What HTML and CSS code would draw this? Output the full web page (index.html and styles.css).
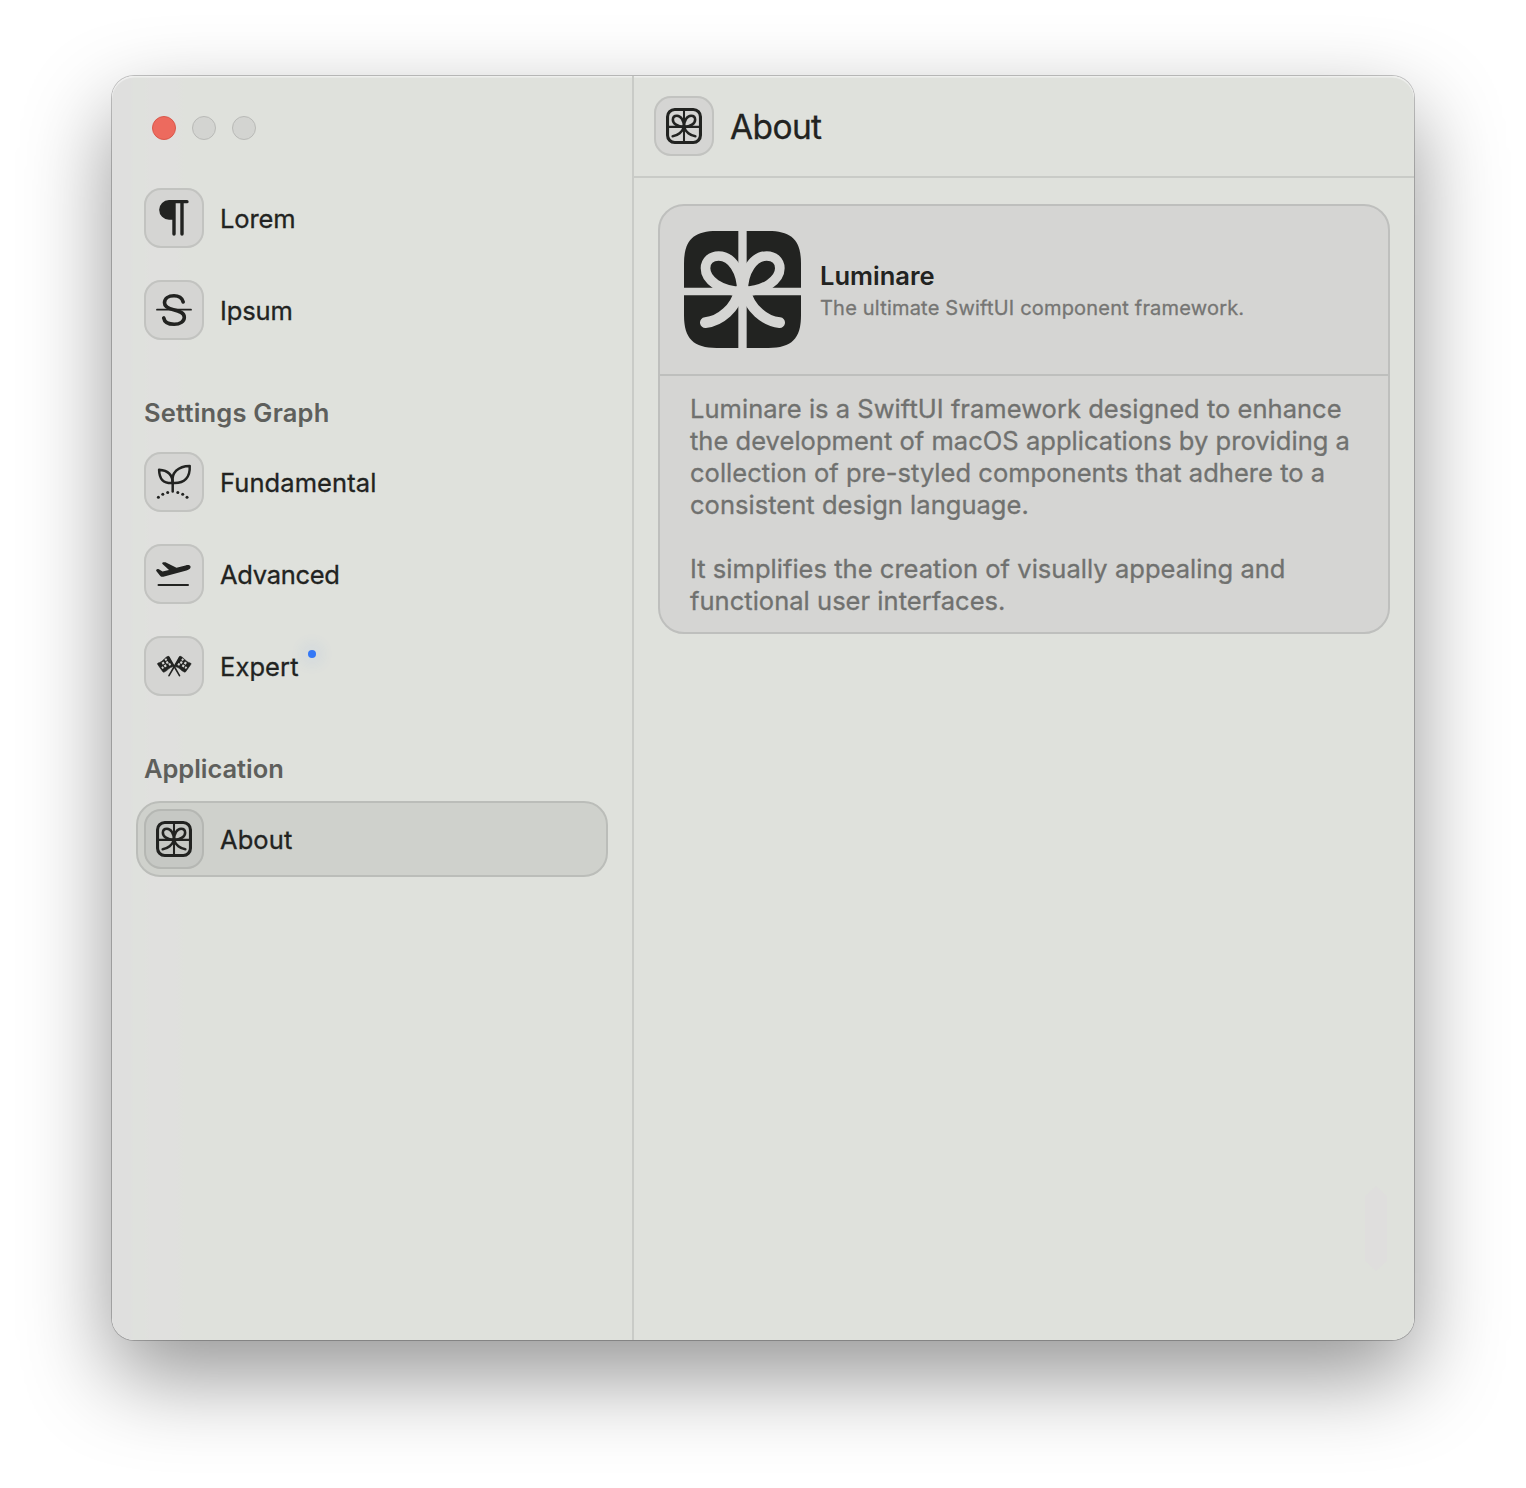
FILE: index.html
```html
<!DOCTYPE html>
<html lang="en">
<head>
<meta charset="utf-8">
<title>Luminare</title>
<link rel="stylesheet" href="styles.css">
</head>
<body>
<svg class="defs" aria-hidden="true">
  <symbol id="gift" viewBox="0 0 105 105">
    <g fill="none" stroke="currentColor" stroke-linecap="round" stroke-linejoin="round">
      <rect x="4.500" y="4.500" width="96" height="96" rx="21" stroke-width="9"/>
      <path d="M52.5 5V100M5 55H100" stroke-width="6"/>
      <path d="M52.5 55C33 55 20 45 20 34C20 26 26 22.500 32 22.500C43 22.500 52.500 36 52.500 55C52.500 36 62 22.500 73 22.500C79 22.500 85 26 85 34C85 45 72 55 52.500 55C48 70 34 81 19.500 82.500M52.500 55C57 70 71 81 85.500 82.500" stroke-width="7.5"/>
    </g>
  </symbol>
</svg>
<main class="window">
  <aside class="sidebar">
    <div class="lights"><i class="light close"></i><i class="light"></i><i class="light"></i></div>
    <nav class="group">
      <a class="item"><span class="tile"><svg viewBox="0 0 60 60"><path d="M25 12H43a1.600 1.600 0 0 1 0 3.300H39.700V46a1.700 1.700 0 0 1-3.400 0V15.300H31.700V46a1.700 1.700 0 0 1-3.400 0V31.700H25a9.850 9.850 0 0 1 0-19.700Z" fill="currentColor"/></svg></span><span class="label">Lorem</span></a>
      <a class="item"><span class="tile"><svg viewBox="0 0 60 60"><g fill="none" stroke="currentColor" stroke-linecap="round"><path d="M39.200 22C38.300 18 34.500 15.700 30 15.700C24.500 15.700 20.500 18.500 20.500 22.800C20.500 27 24 28.500 29.500 29.800C35.500 31.200 40.300 32.800 40.300 37.200C40.300 41.500 36 44.300 30.200 44.300C24.500 44.300 20.400 42 19.700 37.900" stroke-width="3.600"/><path d="M13 29.700H47" stroke-width="1.800"/></g></svg></span><span class="label">Ipsum</span></a>
    </nav>
    <h2 class="heading graph">Settings Graph</h2>
    <nav class="group">
      <a class="item"><span class="tile"><svg viewBox="0 0 60 60"><g fill="none" stroke="currentColor" stroke-width="2.500" stroke-linejoin="round" stroke-linecap="round"><path d="M28.700 39.500V31"/><path d="M28.700 31C19 31.500 15.300 27 15.100 17.700C23 18.300 28.700 22 28.700 31Z"/><path d="M28.700 31C27 21 34 14 45.700 13.900C46.300 25 41 31.800 28.700 31Z"/></g><g fill="currentColor"><circle cx="14.400" cy="45.300" r="1.500"/><circle cx="18.800" cy="42.200" r="1.500"/><circle cx="23.700" cy="40.400" r="1.500"/><circle cx="33.800" cy="40.400" r="1.500"/><circle cx="38.700" cy="42.200" r="1.500"/><circle cx="43" cy="45.300" r="1.500"/></g></svg></span><span class="label expert">Fundamental</span></a>
      <a class="item"><span class="tile"><svg viewBox="0 0 60 60"><path d="M14.500 40.900H44" stroke="currentColor" stroke-width="2" stroke-linecap="round"/><path d="M12.700 25.500C13.900 24.800 14.800 25 15.700 25.700L18.500 27.600L25 25.900L18.500 20C17.900 19.200 18.300 18.500 19.300 18.300L21.500 18.300L32.500 23.700L41.500 21.400C44.300 20.800 46.300 21 46.600 22.700C46.800 24.700 45 25.700 42.500 26.400L19.300 32.700C17.700 33.100 16.700 32.700 15.900 31.600L12.500 27.200C12 26.500 12 25.900 12.700 25.500Z" fill="currentColor"/></svg></span><span class="label advanced">Advanced</span></a>
      <a class="item"><span class="tile"><svg viewBox="0 0 60 60"><defs><g id="flag"><path d="M24.700 21L35.500 39.700" fill="none" stroke="currentColor" stroke-width="1.600" stroke-linecap="round"/><path d="M24.300 20.200C20.500 21.200 19.500 25.700 14 27.100Q13.100 27.500 13.700 28.400L18.800 35.700Q19.400 36.400 20.300 36C24 34.500 24.500 31.500 29.500 30.500L24.800 20.800Z" fill="currentColor" stroke="currentColor" stroke-width=".6"/><path d="M20.500 23.200l1.700-.9 1.100 1.800-1.700 1zM17.600 26.800l1.900-1.300 1.200 1.900-1.900 1.300zM21.700 26l1.900-1 1.200 2-1.900 1zM19.700 29.500l1.900-1.200 1.200 1.900-1.900 1.300zM24.200 27.800l1.900-.7 1.100 2-1.900.7zM17.300 31.200l1.500-.9 1.200 1.800-1.500.9z" fill="#d5d5d3"/></g></defs><use href="#flag"/><use href="#flag" transform="matrix(-1 0 0 1 60.500 0)"/></svg></span><span class="label expert">Expert<i class="dot"></i></span></a>
    </nav>
    <h2 class="heading last">Application</h2>
    <nav class="group">
      <a class="item selected"><span class="tile"><svg class="gift"><use href="#gift"/></svg></span><span class="label expert">About</span></a>
    </nav>
  </aside>
  <section class="pane">
    <header class="bar"><span class="tile"><svg class="gift"><use href="#gift"/></svg></span><h1 class="title">About</h1></header>
    <article class="card">
      <div class="brand">
        <svg class="logo" viewBox="0 0 351 351"><path d="M98 0H253C323 0 351 28 351 98V253C351 323 323 351 253 351H98C28 351 0 323 0 253V98C0 28 28 0 98 0Z" fill="#222321"/><g fill="none" stroke="#d5d5d3"><path d="M175.500 0V351" stroke-width="25"/><path d="M0 181.500H351" stroke-width="23"/><path d="M174 181C110 181 64.500 147 64.500 112C64.500 89 82 75 104 75C143 75 173.500 121 173.500 181M177 181C241 181 287.500 147 287.500 112C287.500 89 270 75 248 75C209 75 177.500 121 177.500 181" stroke-width="29"/><path d="M166 181C155 230 110 270 64 275M185 181C196 230 241 270 287 275" stroke-width="32" stroke-linecap="round"/></g></svg>
        <div class="names"><strong class="name">Luminare</strong><span class="tagline">The ultimate SwiftUI component framework.</span></div>
      </div>
      <div class="about">
        <p class="copy p1">Luminare is a SwiftUI framework designed to enhance<br>the development of macOS applications by providing a<br>collection of pre-styled components that adhere to a<br>consistent design language.</p>
        <p class="copy">It simplifies the creation of visually appealing and<br>functional user interfaces.</p>
      </div>
    </article>
    <i class="thumb"></i>
  </section>
</main>
</body>
</html>
```
FILE: styles.css
```css
* { box-sizing: border-box; }
body { margin: 0; height: 1488px; padding: 76px 112px 148px; background: #fff; color: #222321; font-family: Inter, "Liberation Sans", sans-serif; overflow: hidden; }
h1, h2, p { margin: 0; }
.defs { position: absolute; width: 0; height: 0; }
.window { display: flex; width: 1302px; height: 1264px; border-radius: 22px; background: linear-gradient(90deg, #dfdfde 0 18px, #dfe1dd 22px 32px, #e0e0de 38px 64px, #dfe1dc 72px); box-shadow: inset 0 1.500px 1px rgba(255,255,255,.5), 0 0 0 1px rgba(0,0,0,.22), 0 36px 88px rgba(0,0,0,.42); }
.sidebar { width: 522px; padding: 40px 24px 0; border-right: 2px solid #c9cbc7; }
.lights { display: flex; gap: 16px; padding-left: 16px; height: 64px; }
.light { width: 24px; height: 24px; border-radius: 50%; background: #d3d4d1; border: 1px solid #b9bab7; }
.close { background: #ed6a5e; border-color: #d9584c; }
.group { display: flex; flex-direction: column; gap: 16px; }
.item { display: flex; align-items: center; gap: 16px; width: 472px; height: 76px; padding: 6px; border: 2px solid transparent; border-radius: 24px; }
.selected { background: #cfd1cc; border-color: #bbbdb9; }
.tile { display: flex; flex: none; align-items: center; justify-content: center; width: 60px; height: 60px; border-radius: 17px; background: #d5d5d3; box-shadow: inset 0 0 0 2px #c2c3c0; }
.selected .tile { background: #c6c8c4; box-shadow: inset 0 0 0 2px #b5b7b3; }
.tile svg { width: 60px; height: 60px; }
.tile .gift { width: 36px; height: 36px; margin-right: 1px; }
.label { position: relative; font-size: 25.500px; line-height: 32px; padding-top: 1px; letter-spacing: -.1px; }
.label, .title, .tagline, .copy { -webkit-text-stroke: .3px currentColor; }
.expert { letter-spacing: .08px; }
.advanced { letter-spacing: -.3px; }
.heading { height: 96px; padding: 49px 0 0 8px; font-size: 25.500px; line-height: 32px; font-weight: 600; color: #5e5f5c; letter-spacing: -.05px; }
.graph { letter-spacing: .2px; }
.last { height: 97px; }
.dot { position: absolute; right: -17px; top: 0; width: 8px; height: 8px; border-radius: 50%; background: #3478f6; box-shadow: 0 0 16px 4px rgba(52,120,246,.12); }
.pane { position: relative; flex: 1; }
.bar { display: flex; align-items: center; gap: 16px; height: 102px; padding: 0 20px; border-bottom: 2px solid #c9cbc7; }
.title { font-size: 33.500px; font-weight: 400; line-height: 42px; padding-top: 1px; letter-spacing: -.6px; }
.card { width: 732px; height: 430px; margin: 26px 24px 0; border: 2px solid #bebfbd; border-radius: 26px; background: #d5d5d3; }
.brand { display: flex; align-items: center; gap: 19px; height: 170px; padding: 0 24px; border-bottom: 2px solid #bebfbd; }
.logo { width: 117px; height: 117px; margin-bottom: 2px; }
.names { display: flex; flex-direction: column; padding-top: 2px; }
.name { font-size: 25.500px; line-height: 34px; font-weight: 600; }
.tagline { font-size: 20px; line-height: 30px; color: #757573; letter-spacing: .2px; }
.about { padding: 17px 30px 0; }
.copy { font-size: 25.500px; line-height: 32px; color: #70716f; white-space: nowrap; letter-spacing: .03px; }
.p1 { margin-bottom: 32px; }
.thumb { position: absolute; right: 27px; bottom: 69px; width: 22px; height: 85px; background: #dfdedd; clip-path: polygon(50% 0, 100% 12%, 100% 88%, 50% 100%, 0 88%, 0 12%); }
```
